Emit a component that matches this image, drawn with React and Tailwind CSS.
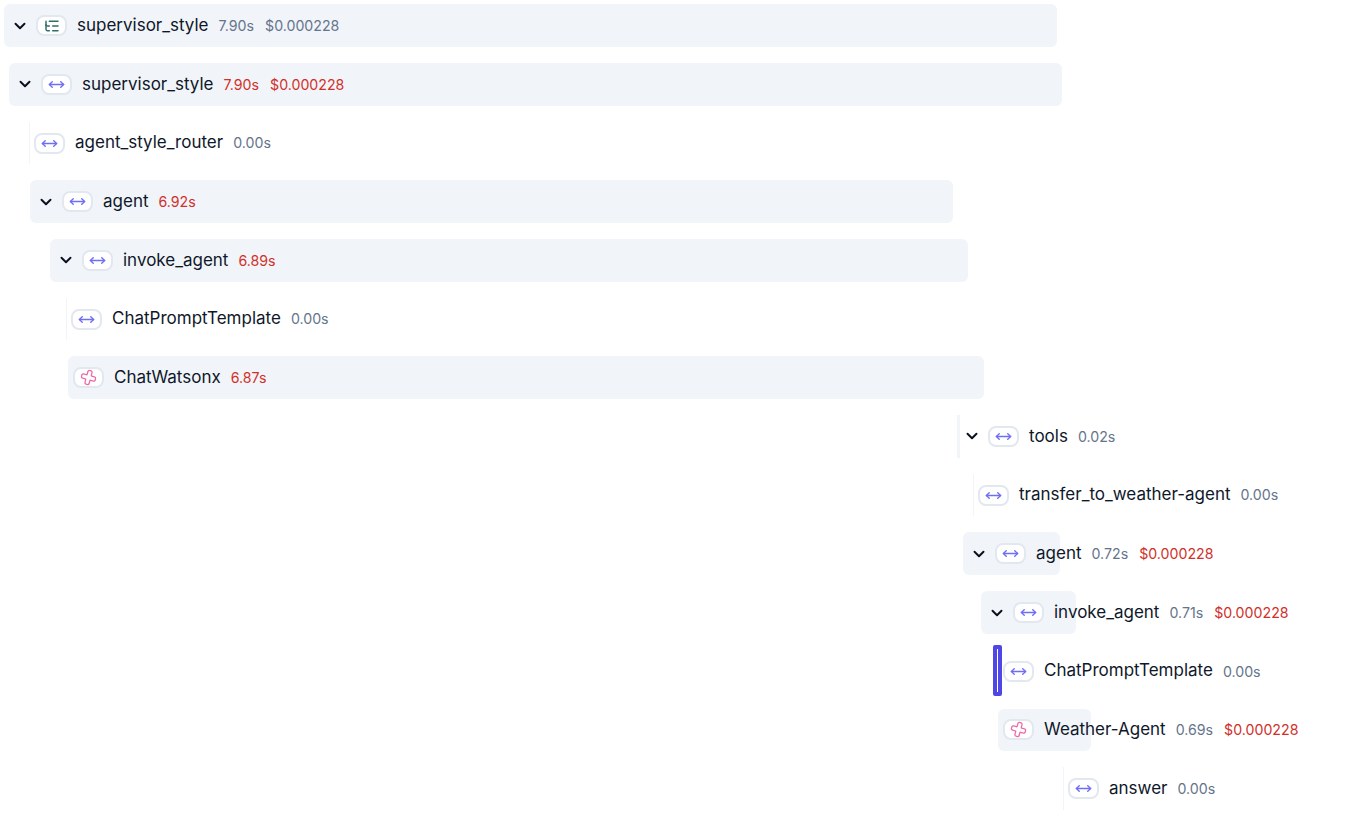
import React from "react";
import { ChevronDown, ListTree, MoveHorizontal, Cross } from "lucide-react";

const rows = [
    { left: 4, width: 1053, bar: true, chevron: true, icon: "chain", name: "supervisor_style", time: "7.90s", cost: "$0.000228", neutralCost: true },
    { left: 9, width: 1053, bar: true, chevron: true, name: "supervisor_style", time: "7.90s", cost: "$0.000228", slow: true },
    { left: 29, width: 300, line: true, name: "agent_style_router", time: "0.00s" },
    { left: 30, width: 923, bar: true, chevron: true, name: "agent", time: "6.92s", slow: true },
    { left: 50, width: 918, bar: true, chevron: true, name: "invoke_agent", time: "6.89s", slow: true },
    { left: 66, width: 300, line: true, name: "ChatPromptTemplate", time: "0.00s" },
    { left: 68, width: 916, bar: true, icon: "llm", name: "ChatWatsonx", time: "6.87s", slow: true },
    { left: 957, width: 160, thick: true, chevron: true, name: "tools", time: "0.02s" },
    { left: 973, width: 320, line: true, name: "transfer_to_weather-agent", time: "0.00s" },
    { left: 963, width: 97, bar: true, chevron: true, name: "agent", time: "0.72s", cost: "$0.000228" },
    { left: 981, width: 95, bar: true, chevron: true, name: "invoke_agent", time: "0.71s", cost: "$0.000228" },
    { left: 998, width: 270, focused: true, name: "ChatPromptTemplate", time: "0.00s" },
    { left: 998, width: 93, bar: true, icon: "llm", name: "Weather-Agent", time: "0.69s", cost: "$0.000228" },
    { left: 1063, width: 160, line: true, name: "answer", time: "0.00s" },
];

function RunIcon({ icon }) {
    return (
        <span className="flex h-[21px] w-[31px] shrink-0 items-center justify-center rounded-lg border-2 border-[#e2e8f0] bg-white">
            {icon === "chain" && <ListTree className="h-4 w-4 text-[#2f6f64]" strokeWidth={2.2} />}
            {icon === "llm" && <Cross className="h-[17px] w-[17px] rotate-[15deg] text-[#ec6aa8]" strokeWidth={1.8} />}
            {!icon && <MoveHorizontal className="h-[17px] w-[17px] text-[#6f6ff5]" strokeWidth={2} />}
        </span>
    );
}

function Row({ row }) {
    const { left, width, bar, line, thick, focused, chevron, icon, name, time, cost, slow, neutralCost } = row;

    let rowStyle = "pl-[5px]";
    if (bar) rowStyle = "rounded-md bg-[#f1f5f9] pl-[5px]";
    if (line) rowStyle = "border-l border-[#f1f5f9] pl-[4px]";
    if (thick) rowStyle = "border-l-[3px] border-[#f1f5f9] pl-[1px]";

    return (
        <div
            className={`relative flex h-[42.7px] items-center whitespace-nowrap ${rowStyle}`}
            style={{ marginLeft: left, width }}
        >
            {focused && (
                <div className="absolute left-[-5px] top-[-5px] h-[51px] w-[9px] rounded-[2px] border-4 border-[#4f46e5] bg-white" />
            )}
            {chevron && (
                <span className="flex w-[27px] shrink-0 justify-start pl-[2px]">
                    <ChevronDown className="h-[18px] w-[18px] text-[#0b1020]" strokeWidth={2.6} />
                </span>
            )}
            <RunIcon icon={icon} />
            <span className="ml-[10px] text-[17px] text-[#0f172a]">{name}</span>
            <span className={`ml-[10px] text-[14.2px] ${slow ? "text-[#d1302a]" : "text-[#64748b]"}`}>{time}</span>
            {cost && (
                <span className={`ml-[11px] text-[14.2px] ${neutralCost ? "text-[#64748b]" : "text-[#d1302a]"}`}>{cost}</span>
            )}
        </div>
    );
}

export default function App() {
    return (
        <div className="flex h-[818px] w-[1348px] flex-col gap-[16px] overflow-hidden bg-white pt-[4.3px] font-['Inter',sans-serif]">
            {rows.map((row, i) => (
                <Row key={i} row={row} />
            ))}
        </div>
    );
}
